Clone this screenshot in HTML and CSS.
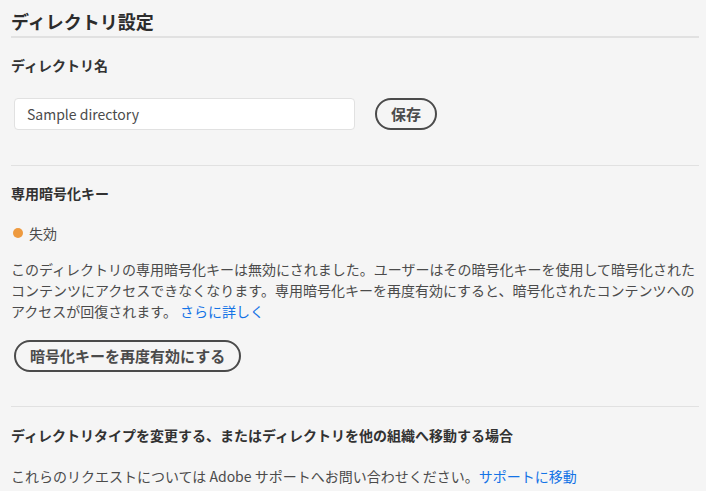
FILE: index.html
```html
<!DOCTYPE html>
<html lang="ja">
<head>
<meta charset="utf-8">
<title>ディレクトリ設定</title>
<link rel="stylesheet" href="styles.css">
</head>
<body>
<main class="page">
  <h1 class="title">ディレクトリ設定</h1>

  <section class="section">
    <h2 class="label label-first">ディレクトリ名</h2>
    <div class="name-row">
      <input class="text-input" type="text" value="Sample directory">
      <button class="btn btn-save" type="button">保存</button>
    </div>
  </section>

  <hr class="divider divider-one">

  <section class="section">
    <h2 class="label label-key">専用暗号化キー</h2>
    <div class="status"><span class="dot"></span><span class="status-text">失効</span></div>
    <p class="para">このディレクトリの専用暗号化キーは無効にされました。ユーザーはその暗号化キーを使用して暗号化されたコンテンツにアクセスできなくなります。専用暗号化キーを再度有効にすると、暗号化されたコンテンツへのアクセスが回復されます。 <a class="link" href="#">さらに詳しく</a></p>
    <button class="btn btn-reactivate" type="button">暗号化キーを再度有効にする</button>
  </section>

  <hr class="divider divider-two">

  <section class="section">
    <h2 class="label label-move">ディレクトリタイプを変更する、またはディレクトリを他の組織へ移動する場合</h2>
    <p class="support">これらのリクエストについては Adobe サポートへお問い合わせください。<a class="link" href="#">サポートに移動</a></p>
  </section>
</main>
</body>
</html>
```

FILE: styles.css
```css
html, body {
  margin: 0;
  padding: 0;
  background: #f5f5f5;
}

body {
  font-family: "Noto Sans CJK JP", "Noto Sans", sans-serif;
  color: #4b4b4b;
  font-size: 14px;
}

.page {
  padding: 0 7px 0 11px;
}

.title {
  margin: 0;
  padding-top: 8px;
  padding-bottom: 2px;
  font-size: 18px;
  line-height: 26px;
  font-weight: 700;
  color: #2c2c2c;
  border-bottom: 2px solid #e1e1e1;
}

.section {
  display: flex;
  flex-direction: column;
  align-items: flex-start;
}

.label {
  margin: 0;
  font-size: 14px;
  line-height: 20px;
  font-weight: 700;
  color: #323232;
}

.label-first { margin-top: 17px; }
.label-key { margin-top: 17px; }
.label-move { margin-top: 18px; }

.name-row {
  display: flex;
  align-items: center;
  gap: 20px;
  margin-top: 23px;
  margin-left: 3px;
}

.text-input {
  box-sizing: border-box;
  width: 341px;
  height: 32px;
  padding: 0 12px;
  border: 1px solid #e1e1e1;
  border-radius: 4px;
  background: #ffffff;
  font-family: "Noto Sans CJK JP", "Noto Sans", sans-serif;
  font-size: 14px;
  color: #4b4b4b;
  outline: none;
}

.btn {
  box-sizing: border-box;
  height: 32px;
  padding: 0 14px;
  border: 2px solid #4b4b4b;
  border-radius: 16px;
  background: transparent;
  font-family: "Noto Sans CJK JP", "Noto Sans", sans-serif;
  font-size: 15px;
  font-weight: 700;
  color: #4b4b4b;
  line-height: 28px;
}

.divider {
  border: 0;
  height: 1px;
  background: #e1e1e1;
  margin: 0;
}

.divider-one { margin-top: 35px; }
.divider-two { margin-top: 34px; }

.status {
  display: flex;
  align-items: center;
  gap: 6px;
  margin-top: 20px;
  margin-left: 2px;
  line-height: 20px;
}

.dot {
  width: 10px;
  height: 10px;
  border-radius: 50%;
  background: #ee9a3f;
}

.status-text {
  color: #4b4b4b;
}

.para {
  margin: 16px 0 0;
  line-height: 21px;
}

.link {
  color: #1473e6;
  text-decoration: none;
}

.btn-reactivate {
  margin-top: 18px;
  margin-left: 3px;
}

.support {
  margin: 21px 0 0;
  line-height: 20px;
}
```
